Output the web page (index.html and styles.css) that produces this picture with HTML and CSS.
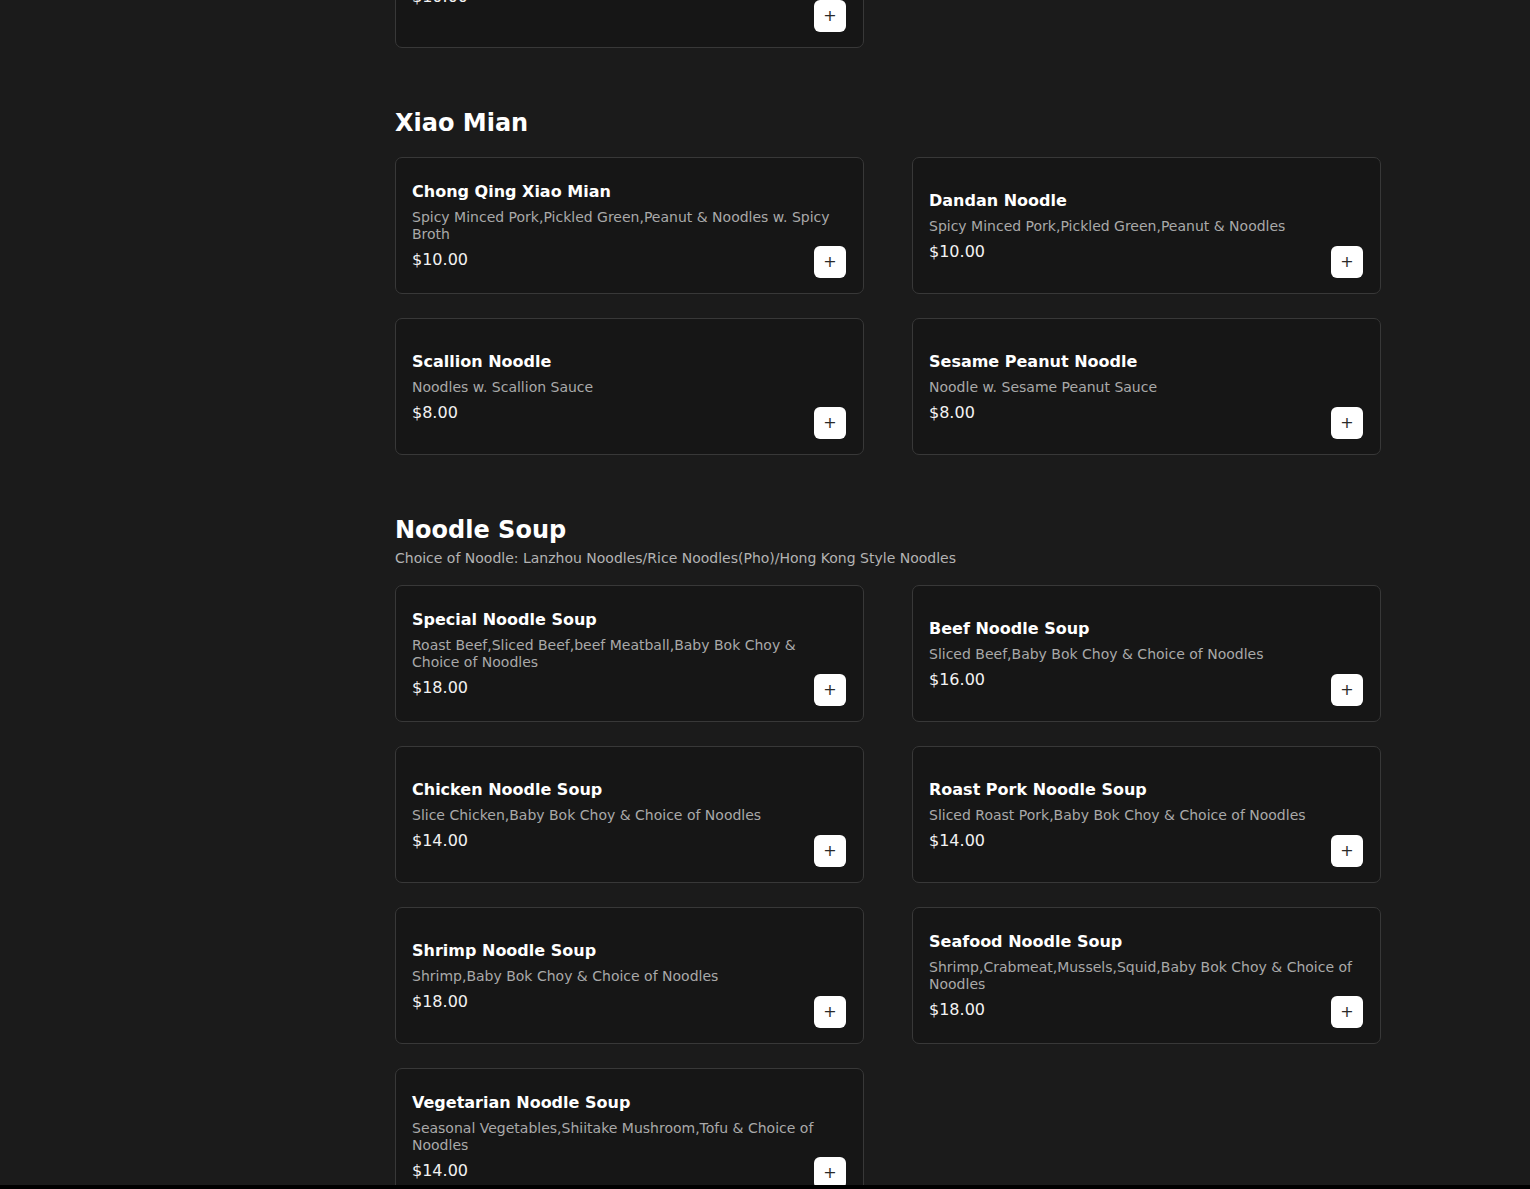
FILE: index.html
```html
<!DOCTYPE html>
<html>
<head>
  <meta charset="UTF-8">
  <title>Menu</title>
  <link rel="stylesheet" href="styles.css">
</head>
<body>
  <div class="layout">
    <aside class="sidebar"></aside>

    <main class="menu">
      <section class="category category-cut">
        <div class="item-grid">
          <div class="item-card">
            <div class="item-info">
              <div class="item-name"></div>
              <div class="item-desc"></div>
              <div class="item-price">$10.00</div>
            </div>
            <button class="add-btn">+</button>
          </div>
        </div>
      </section>

      <section class="category">
        <div class="category-head">
          <h2>Xiao Mian</h2>
        </div>
        <div class="item-grid">
          <div class="item-card">
            <div class="item-info">
              <div class="item-name">Chong Qing Xiao Mian</div>
              <div class="item-desc">Spicy Minced Pork,Pickled Green,Peanut &amp; Noodles w. Spicy Broth</div>
              <div class="item-price">$10.00</div>
            </div>
            <button class="add-btn">+</button>
          </div>
          <div class="item-card">
            <div class="item-info">
              <div class="item-name">Dandan Noodle</div>
              <div class="item-desc">Spicy Minced Pork,Pickled Green,Peanut &amp; Noodles</div>
              <div class="item-price">$10.00</div>
            </div>
            <button class="add-btn">+</button>
          </div>
          <div class="item-card">
            <div class="item-info">
              <div class="item-name">Scallion Noodle</div>
              <div class="item-desc">Noodles w. Scallion Sauce</div>
              <div class="item-price">$8.00</div>
            </div>
            <button class="add-btn">+</button>
          </div>
          <div class="item-card">
            <div class="item-info">
              <div class="item-name">Sesame Peanut Noodle</div>
              <div class="item-desc">Noodle w. Sesame Peanut Sauce</div>
              <div class="item-price">$8.00</div>
            </div>
            <button class="add-btn">+</button>
          </div>
        </div>
      </section>

      <section class="category">
        <div class="category-head">
          <h2>Noodle Soup</h2>
          <p>Choice of Noodle: Lanzhou Noodles/Rice Noodles(Pho)/Hong Kong Style Noodles</p>
        </div>
        <div class="item-grid">
          <div class="item-card">
            <div class="item-info">
              <div class="item-name">Special Noodle Soup</div>
              <div class="item-desc">Roast Beef,Sliced Beef,beef Meatball,Baby Bok Choy &amp; Choice of Noodles</div>
              <div class="item-price">$18.00</div>
            </div>
            <button class="add-btn">+</button>
          </div>
          <div class="item-card">
            <div class="item-info">
              <div class="item-name">Beef Noodle Soup</div>
              <div class="item-desc">Sliced Beef,Baby Bok Choy &amp; Choice of Noodles</div>
              <div class="item-price">$16.00</div>
            </div>
            <button class="add-btn">+</button>
          </div>
          <div class="item-card">
            <div class="item-info">
              <div class="item-name">Chicken Noodle Soup</div>
              <div class="item-desc">Slice Chicken,Baby Bok Choy &amp; Choice of Noodles</div>
              <div class="item-price">$14.00</div>
            </div>
            <button class="add-btn">+</button>
          </div>
          <div class="item-card">
            <div class="item-info">
              <div class="item-name">Roast Pork Noodle Soup</div>
              <div class="item-desc">Sliced Roast Pork,Baby Bok Choy &amp; Choice of Noodles</div>
              <div class="item-price">$14.00</div>
            </div>
            <button class="add-btn">+</button>
          </div>
          <div class="item-card">
            <div class="item-info">
              <div class="item-name">Shrimp Noodle Soup</div>
              <div class="item-desc">Shrimp,Baby Bok Choy &amp; Choice of Noodles</div>
              <div class="item-price">$18.00</div>
            </div>
            <button class="add-btn">+</button>
          </div>
          <div class="item-card">
            <div class="item-info">
              <div class="item-name">Seafood Noodle Soup</div>
              <div class="item-desc">Shrimp,Crabmeat,Mussels,Squid,Baby Bok Choy &amp; Choice of Noodles</div>
              <div class="item-price">$18.00</div>
            </div>
            <button class="add-btn">+</button>
          </div>
          <div class="item-card">
            <div class="item-info">
              <div class="item-name">Vegetarian Noodle Soup</div>
              <div class="item-desc">Seasonal Vegetables,Shiitake Mushroom,Tofu &amp; Choice of Noodles</div>
              <div class="item-price">$14.00</div>
            </div>
            <button class="add-btn">+</button>
          </div>
        </div>
      </section>
    </main>
  </div>

  <div class="bottom-bar"></div>
</body>
</html>
```

FILE: styles.css
```css
* {
  margin: 0;
  padding: 0;
  box-sizing: border-box;
}

html,
body {
  height: 100%;
  overflow: hidden;
}

body {
  font-family: "DejaVu Sans", Verdana, sans-serif;
  background-color: #1b1b1b;
  color: #ffffff;
}

.layout {
  display: grid;
  grid-template-columns: 347px 986px;
  column-gap: 48px;
  margin-top: -89px;
}

.menu {
  display: flex;
  flex-direction: column;
  gap: 61px;
}

.category-head {
  display: flex;
  flex-direction: column;
  gap: 6px;
  margin-bottom: 20px;
}

.category-head h2 {
  font-size: 24px;
  line-height: 28px;
  font-weight: 700;
}

.category-head p {
  font-size: 14px;
  line-height: 17px;
  color: #b3b3b3;
  margin-bottom: -2px;
}

.item-grid {
  display: grid;
  grid-template-columns: 1fr 1fr;
  column-gap: 48px;
  row-gap: 24px;
}

.item-card {
  position: relative;
  min-height: 137px;
  padding: 16px;
  background-color: #161616;
  border: 1px solid #383838;
  border-radius: 7px;
  display: flex;
  align-items: center;
}

.item-info {
  flex: 1;
  min-width: 0;
}

.item-name {
  font-size: 16px;
  line-height: 19px;
  font-weight: 700;
  margin-bottom: 8px;
}

.item-desc {
  font-size: 14px;
  line-height: 17px;
  color: #a9a9a9;
  margin-bottom: 7px;
}

.item-price {
  font-size: 16px;
  line-height: 19px;
  color: #f2f2f2;
}

.category-cut .item-name {
  height: 25px;
}

/* add button sits over the card's bottom-right corner */
.add-btn {
  position: absolute;
  right: 17px;
  bottom: 15px;
  width: 32px;
  height: 32px;
  border: none;
  border-radius: 6px;
  background-color: #ffffff;
  color: #2a2a2a;
  font-family: "DejaVu Sans", sans-serif;
  font-size: 16px;
  line-height: 32px;
  cursor: pointer;
}

.bottom-bar {
  position: fixed;
  left: 0;
  right: 0;
  bottom: 0;
  height: 4px;
  background-color: #000000;
}
```
